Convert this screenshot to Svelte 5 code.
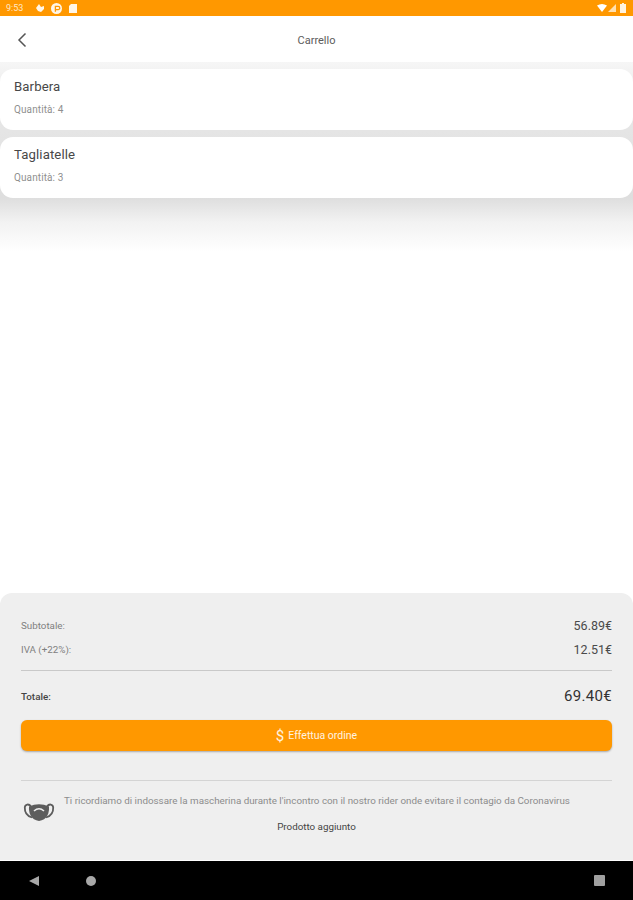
<script>
  const items = [
    { name: 'Barbera', qty: 4 },
    { name: 'Tagliatelle', qty: 3 }
  ];
</script>

<div class="screen">
  <div class="status">
    <span class="time">9:53</span>
    <svg class="ic-a" viewBox="0 0 10 10"><path d="M1 5 L4 1 L6 4 L9 3 L9 6 L6 9 L3 8 Z" fill="#fff6e8"/></svg>
    <svg class="ic-b" viewBox="0 0 10 10"><circle cx="5" cy="5" r="5" fill="#fff6e8"/><path d="M4 8V3h2.500a1.300 1.300 0 0 1 0 3H4" fill="none" stroke="#ff9800" stroke-width="1.200"/></svg>
    <svg class="ic-c" viewBox="0 0 8 9"><path d="M2 0H8V9H0V2Z" fill="#fff6e8"/></svg>
    <span class="spacer"></span>
    <svg class="wifi" viewBox="0 0 10 8"><path d="M0 1.500Q5 -1.500 10 1.500L5 8Z" fill="#fff"/></svg>
    <svg class="signal" viewBox="0 0 8 8"><path d="M8 0V8H0Z" fill="#ffe0b0"/></svg>
    <svg class="battery" viewBox="0 0 6 10"><path d="M2 0H4V1H6V10H0V1H2Z" fill="#fff3e0"/></svg>
  </div>

  <header class="header">
    <svg class="back" viewBox="0 0 10 16"><path d="M8.500 1.500 L2 8 L8.500 14.500" fill="none" stroke="#555" stroke-width="1.500"/></svg>
    <span class="title">Carrello</span>
  </header>

  <main class="list">
    {#each items as item}
      <div class="card">
        <div class="name">{item.name}</div>
        <div class="qty">Quantità: {item.qty}</div>
      </div>
    {/each}
  </main>

  <section class="panel">
    <div class="row sub">
      <span class="label">Subtotale:</span><span class="value">56.89€</span>
    </div>
    <div class="row iva">
      <span class="label">IVA (+22%):</span><span class="value">12.51€</span>
    </div>
    <hr class="rule first" />
    <div class="row total">
      <span class="label strong">Totale:</span><span class="grand">69.40€</span>
    </div>
    <button class="order">
      <span class="dollar">$</span><span>Effettua ordine</span>
    </button>
    <hr class="rule second" />
    <div class="notice">
      <svg class="mask" viewBox="0 0 32 22">
        <path d="M8 5.500C6 2.500 2 3 1.800 6.500C1.600 11 4 15 9 16.500" fill="none" stroke="#5d5d5d" stroke-width="1.800"/>
        <path d="M24 5.500C26 2.500 30 3 30.200 6.500C30.400 11 28 15 23 16.500" fill="none" stroke="#5d5d5d" stroke-width="1.800"/>
        <path d="M6 5.500Q16 1 26 5.500C26.500 12 24 19 16 20C8 19 5.500 12 6 5.500Z" fill="#5d5d5d"/>
        <path d="M11 10Q16 5.500 21 10" fill="none" stroke="#eee" stroke-width="1.500"/>
      </svg>
      <p>Ti ricordiamo di indossare la mascherina durante l'incontro con il nostro rider onde evitare il contagio da Coronavirus</p>
    </div>
    <div class="added">Prodotto aggiunto</div>
  </section>

  <nav class="nav">
    <span class="tri"></span>
    <span class="dot"></span>
    <span class="spacer"></span>
    <span class="sq"></span>
  </nav>
</div>

<style>
  :global(body) { margin: 0; background: #fff; }
  .screen {
    width: 633px; height: 900px; display: flex; flex-direction: column;
    font-family: Roboto, "Liberation Sans", sans-serif; overflow: hidden; background: #fff;
  }
  .status {
    height: 16px; background: #ff9800; display: flex; align-items: center;
    padding: 0 6px 0 6px; box-sizing: border-box; flex: none;
  }
  .time { font-size: 9px; color: #ffe9c9; width: 29px; }
  .ic-a { width: 10px; height: 10px; margin-right: 6px; }
  .ic-b { width: 11px; height: 11px; margin-right: 7px; }
  .ic-c { width: 8px; height: 9px; }
  .spacer { flex: 1; }
  .wifi { width: 10px; height: 8px; margin-right: 1px; }
  .signal { width: 8px; height: 8px; margin-right: 4px; }
  .battery { width: 6px; height: 10px; margin-right: 1px; }

  .header {
    height: 46px; flex: none; display: flex; align-items: center; justify-content: center;
    position: relative; background: #fff; padding-top: 3px; box-sizing: border-box;
  }
  .back { position: absolute; left: 17px; top: 16px; width: 10px; height: 16px; }
  .title { font-size: 11px; color: #5c5c5c; }

  .list {
    flex: 1; min-height: 0; padding-top: 7px; display: flex; flex-direction: column; gap: 7px;
    background: linear-gradient(#f6f6f6 0, #e8e8e8 40px, #dedede 136px, #f2f2f2 160px, #fff 190px);
  }
  .card {
    height: 61px; background: #fff; border-radius: 13px;
    padding: 10px 14px 0; box-sizing: border-box;
  }
  .name { font-size: 13.200px; color: #484848; line-height: 16px; letter-spacing: .1px; }
  .qty { font-size: 10px; color: #8f8f8f; line-height: 12px; margin-top: 9px; letter-spacing: .1px; }

  .panel {
    height: 268px; flex: none; background: #efefef; border-radius: 12px 12px 0 0;
    padding: 0 21px; box-sizing: border-box; display: flex; flex-direction: column;
    border-bottom: 1px solid #fff;
  }
  .row { display: flex; justify-content: space-between; align-items: center; }
  .sub { margin-top: 25px; height: 14px; }
  .iva { margin-top: 10px; height: 14px; }
  .label { font-size: 9.800px; color: #808080; }
  .label.strong { color: #444; font-weight: 500; }
  .value { font-size: 12.500px; color: #4a4a4a; }
  .rule { border: 0; height: 1px; background: #c9c9c9; margin: 0; width: 100%; }
  .rule.first { margin-top: 14px; }
  .total { margin-top: 16px; height: 18px; margin-bottom: 1px; }
  .grand { font-size: 15px; color: #333; letter-spacing: .3px; }
  .order {
    margin-top: 14px; height: 31px; flex: none; border: 0; border-radius: 6px; background: #ff9800; color: #fff3e0;
    font: inherit; font-size: 10.500px; display: flex; align-items: center; justify-content: center; gap: 4px;
    box-shadow: 0 1px 2px rgba(0,0,0,.3); padding: 0;
  }
  .dollar { font-size: 15px; }
  .rule.second { margin-top: 29px; background: #d4d4d4; }
  .notice { display: flex; align-items: flex-start; margin-top: 14px; height: 26px; }
  .mask { width: 32px; height: 22px; flex: none; margin: 6px 0 0 2px; }
  .notice p { margin: 0 0 0 9px; font-size: 9.820px; line-height: 12px; color: #8c8c8c; white-space: nowrap; }
  .added { text-align: center; font-size: 9.800px; color: #444; line-height: 12px; }

  .nav {
    flex: none; height: 39px; background: #000; display: flex; align-items: center; padding: 0 28px 0 29px; box-sizing: border-box;
  }
  .tri { width: 0; height: 0; border-style: solid; border-width: 5.500px 10px 5.500px 0; border-color: transparent #a8a8a8 transparent transparent; }
  .dot { width: 10px; height: 10px; border-radius: 50%; background: #a8a8a8; margin-left: 47px; }
  .sq { width: 11px; height: 11px; background: #a0a0a0; border-radius: 1px; }
</style>
